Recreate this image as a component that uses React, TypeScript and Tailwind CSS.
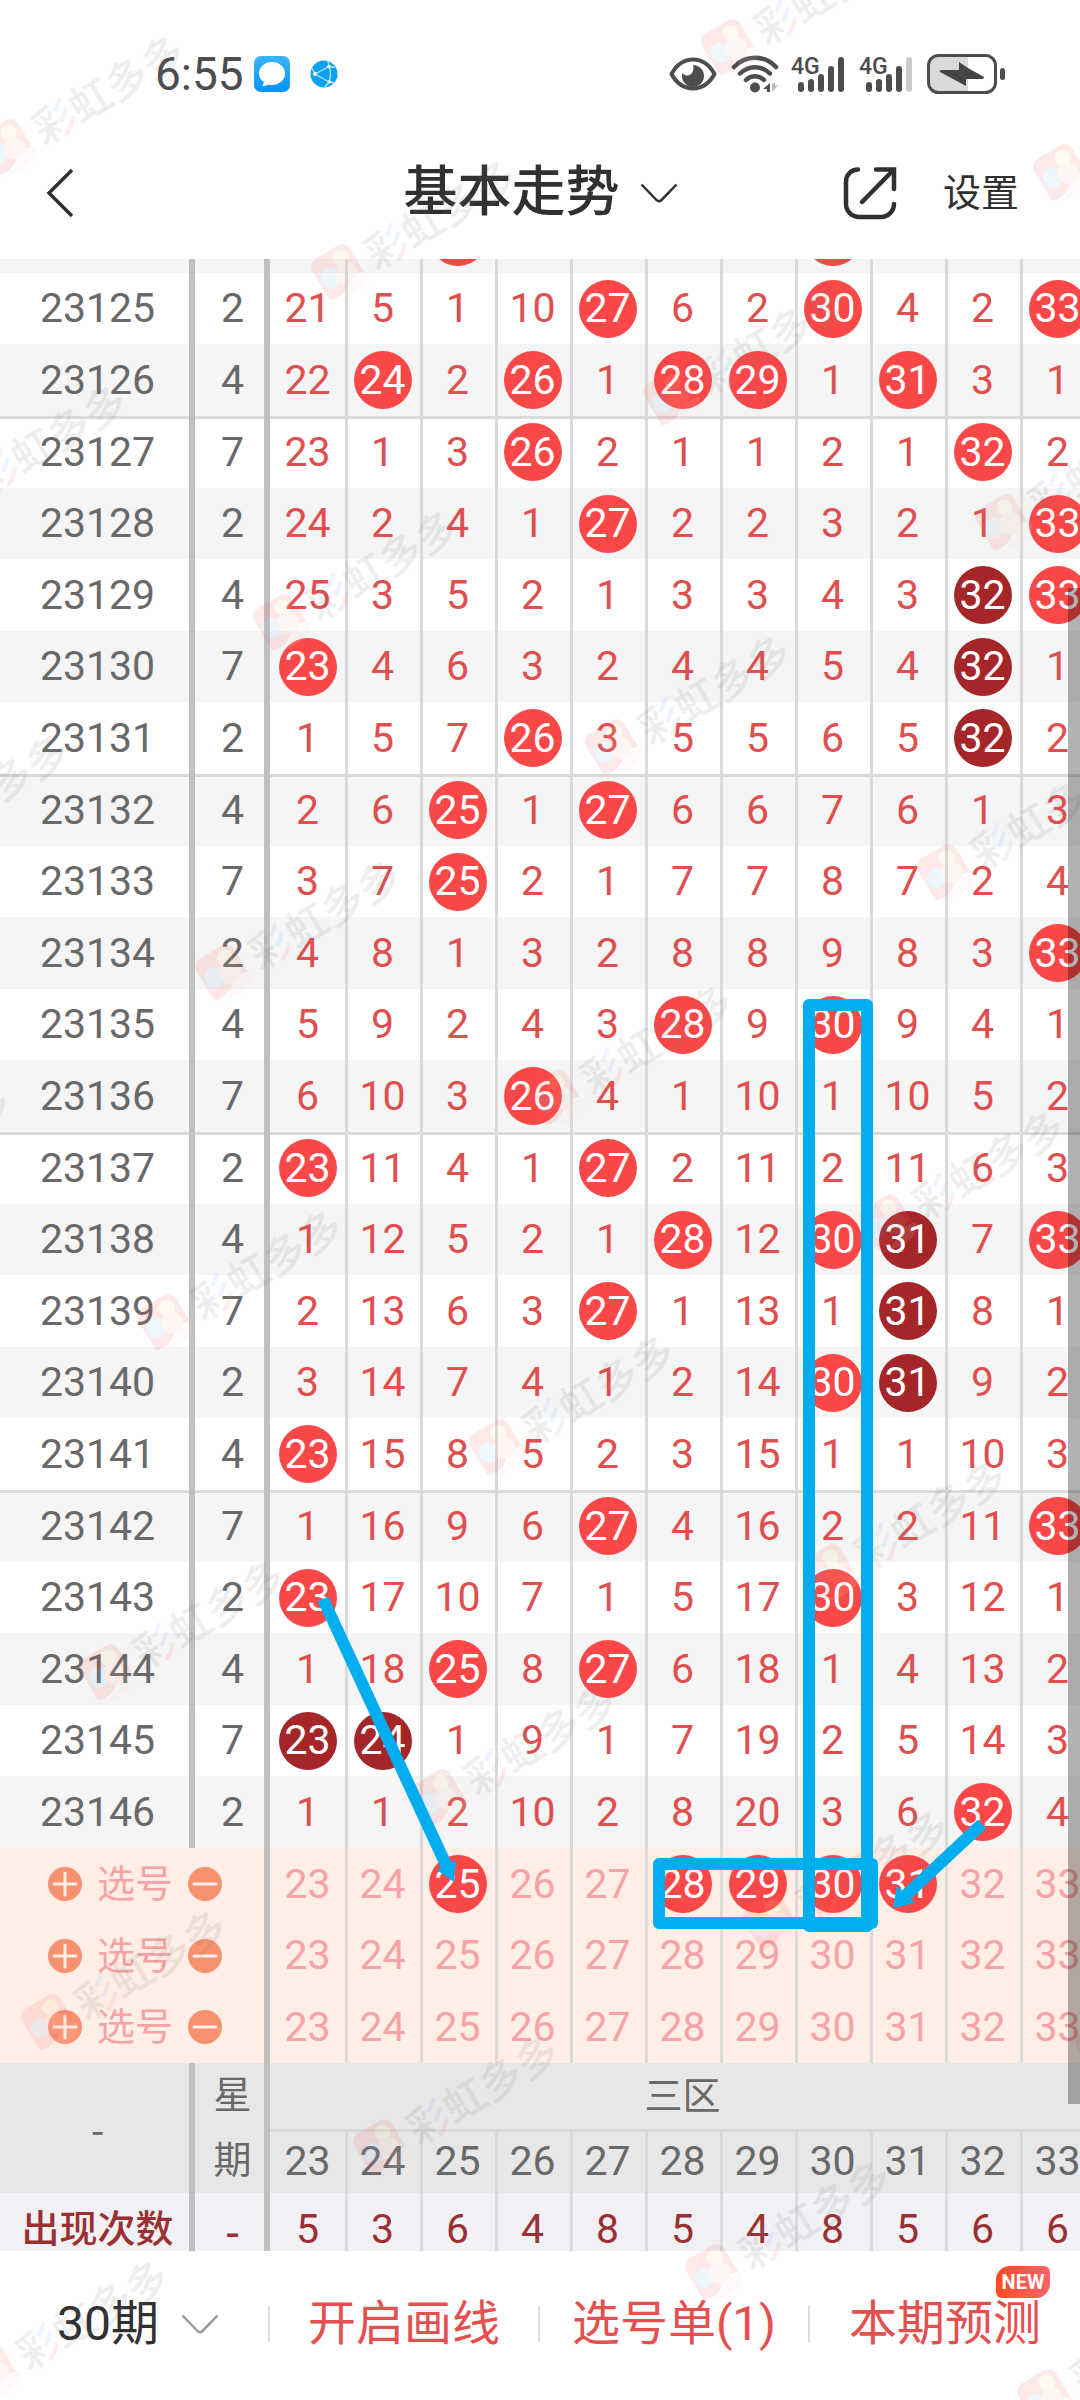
import * as React from 'react';
import { clsx } from 'clsx';

/**
 * Trend chart page: draw history for zone three, pick rows, totals and
 * the lines a user has drawn over the chart.
 */

const NUMBERS = [23, 24, 25, 26, 27, 28, 29, 30, 31, 32, 33];

// "*" is a drawn number, "#" a drawn number that repeats, the rest are misses
interface Draw {
  issue: string;
  weekday: number;
  cells: string;
}

const groups: Draw[][] = [
  [
    { issue: '', weekday: 0, cells: '_ _ * _ _ _ _ * _ _ _' },
    { issue: '23125', weekday: 2, cells: '21 5 1 10 * 6 2 * 4 2 *' },
    { issue: '23126', weekday: 4, cells: '22 * 2 * 1 * * 1 * 3 1' },
  ],
  [
    { issue: '23127', weekday: 7, cells: '23 1 3 * 2 1 1 2 1 * 2' },
    { issue: '23128', weekday: 2, cells: '24 2 4 1 * 2 2 3 2 1 *' },
    { issue: '23129', weekday: 4, cells: '25 3 5 2 1 3 3 4 3 # *' },
    { issue: '23130', weekday: 7, cells: '* 4 6 3 2 4 4 5 4 # 1' },
    { issue: '23131', weekday: 2, cells: '1 5 7 * 3 5 5 6 5 # 2' },
  ],
  [
    { issue: '23132', weekday: 4, cells: '2 6 * 1 * 6 6 7 6 1 3' },
    { issue: '23133', weekday: 7, cells: '3 7 * 2 1 7 7 8 7 2 4' },
    { issue: '23134', weekday: 2, cells: '4 8 1 3 2 8 8 9 8 3 *' },
    { issue: '23135', weekday: 4, cells: '5 9 2 4 3 * 9 * 9 4 1' },
    { issue: '23136', weekday: 7, cells: '6 10 3 * 4 1 10 1 10 5 2' },
  ],
  [
    { issue: '23137', weekday: 2, cells: '* 11 4 1 * 2 11 2 11 6 3' },
    { issue: '23138', weekday: 4, cells: '1 12 5 2 1 * 12 * # 7 *' },
    { issue: '23139', weekday: 7, cells: '2 13 6 3 * 1 13 1 # 8 1' },
    { issue: '23140', weekday: 2, cells: '3 14 7 4 1 2 14 * # 9 2' },
    { issue: '23141', weekday: 4, cells: '* 15 8 5 2 3 15 1 1 10 3' },
  ],
  [
    { issue: '23142', weekday: 7, cells: '1 16 9 6 * 4 16 2 2 11 *' },
    { issue: '23143', weekday: 2, cells: '* 17 10 7 1 5 17 * 3 12 1' },
    { issue: '23144', weekday: 4, cells: '1 18 * 8 * 6 18 1 4 13 2' },
    { issue: '23145', weekday: 7, cells: '# # 1 9 1 7 19 2 5 14 3' },
    { issue: '23146', weekday: 2, cells: '1 1 2 10 2 8 20 3 6 * 4' },
  ],
];

const picks: number[][] = [[25, 28, 29, 30, 31], [], []];
const totals = [5, 3, 6, 4, 8, 5, 4, 8, 5, 6, 6];

// Cell rules are inset shadows so that every column keeps its full width
const headRule = 'shadow-[inset_-6px_0_0_#c0c0c0]';
const headRuleTop = 'shadow-[inset_-6px_0_0_#c0c0c0,inset_0_3px_0_#dadada]';
const thinRule = 'shadow-[inset_3px_0_0_#dadada]';
const thinRuleTop = 'shadow-[inset_3px_0_0_#dadada,inset_0_3px_0_#dadada]';
const topRule = 'shadow-[inset_0_3px_0_#dadada]';

const numberRule = (col: number, top: boolean) => {
  if (col === 0) return top ? topRule : '';
  return top ? thinRuleTop : thinRule;
};

const Ball: React.FC<{ value: number; repeat?: boolean }> = ({ value, repeat }) => (
  <span
    className={clsx(
      'mx-auto flex size-[58px] items-center justify-center rounded-full text-white',
      repeat ? 'bg-[#a52629]' : 'bg-[#fa4848]'
    )}
  >
    {value}
  </span>
);

const DrawRow: React.FC<{ draw: Draw; index: number; shaded: boolean; ruled: boolean }> = ({
  draw,
  index,
  shaded,
  ruled,
}) => (
  <tr className={clsx(index % 2 ? 'h-[71px]' : 'h-[72px]', shaded ? 'bg-[#f5f5f5]' : 'bg-white')}>
    <th scope="row" className={clsx('p-0 font-normal', ruled ? headRuleTop : headRule)}>
      {draw.issue}
    </th>
    <td className={clsx('p-0', ruled ? headRuleTop : headRule)}>{draw.weekday || ''}</td>
    {draw.cells.split(' ').map((cell, col) => (
      <td key={col} className={clsx('p-0 text-[#e04e4e]', numberRule(col, ruled))}>
        {cell === '*' || cell === '#' ? (
          <Ball value={NUMBERS[col]} repeat={cell === '#'} />
        ) : (
          cell.replace('_', '')
        )}
      </td>
    ))}
  </tr>
);

const RoundButton: React.FC<{ label: string; plus?: boolean }> = ({ label, plus }) => (
  <button type="button" aria-label={label} className="size-[34px]">
    <svg viewBox="0 0 34 34" className="size-full">
      <circle cx="17" cy="17" r="17" fill="#f79271" />
      <path d={plus ? 'M6 17h22M17 6v22' : 'M6 17h22'} stroke="#ffeee6" strokeWidth="3" strokeLinecap="round" />
    </svg>
  </button>
);

const PickRow: React.FC<{ picked: number[]; index: number }> = ({ picked, index }) => (
  <tr className={clsx('bg-[#feeee6]', index % 2 ? 'h-[71px]' : 'h-[72px]')}>
    <th scope="row" colSpan={2} className={clsx('p-0 font-normal', headRule)}>
      <div className="flex items-center gap-[15px] pl-12 text-[38px] leading-none text-[#f6a3a5]">
        <RoundButton label="添加" plus />
        <span>选号</span>
        <RoundButton label="删除" />
      </div>
    </th>
    {NUMBERS.map((n, col) => (
      <td key={n} className={clsx('p-0', numberRule(col, false))}>
        <button type="button" className="w-full text-[#f6a3a5]">
          {picked.includes(n) ? <Ball value={n} /> : n}
        </button>
      </td>
    ))}
  </tr>
);

const TrendTable = () => {
  let count = 0;
  return (
    <table className="w-[1095px] shrink-0 table-fixed border-collapse text-center text-[41px] leading-none text-[#696969]">
      <colgroup>
        <col className="w-[195px]" />
        <col className="w-[75px]" />
        {NUMBERS.map((n) => (
          <col key={n} className="w-[75px]" />
        ))}
      </colgroup>
      {groups.map((group, g) => (
        <tbody key={g}>
          {group.map((draw, i) => (
            <DrawRow
              key={draw.issue}
              draw={draw}
              index={i}
              shaded={count++ % 2 === 0}
              ruled={i === 0 && g > 0}
            />
          ))}
        </tbody>
      ))}
      <tbody>
        {picks.map((picked, i) => (
          <PickRow key={i} picked={picked} index={i} />
        ))}
      </tbody>
      <tfoot>
        <tr className="h-[66px] bg-[#e7e7e7] text-[38px]">
          <th rowSpan={2} className={clsx("p-0 font-['Noto_Sans_CJK_SC',sans-serif] font-normal", headRule)}>
            -
          </th>
          <th rowSpan={2} className={clsx('p-0 leading-[65px] font-normal', headRule)}>
            星
            <br />期
          </th>
          <th colSpan={11} className="p-0 font-normal">
            三区
          </th>
        </tr>
        <tr className="h-16 bg-[#e7e7e7]">
          {NUMBERS.map((n, col) => (
            <th key={n} scope="col" className={clsx('p-0 font-normal', numberRule(col, true))}>
              {n}
            </th>
          ))}
        </tr>
        <tr className="h-[72px] bg-[#f1f0f5] text-[#9b3033]">
          <th scope="row" className={clsx('p-0 text-[38px] font-medium', headRule)}>
            出现次数
          </th>
          <td className={clsx("p-0 font-['Noto_Sans_CJK_SC',sans-serif] font-medium", headRule)}>-</td>
          {totals.map((total, col) => (
            <td key={col} className={clsx('p-0', numberRule(col, false))}>
              {total}
            </td>
          ))}
        </tr>
      </tfoot>
    </table>
  );
};

// Signal bars; the last one is dimmed when reception is not full
const Signal: React.FC<{ full?: boolean }> = ({ full }) => (
  <svg viewBox="0 0 54 38" className="h-[38px] w-[54px] overflow-visible">
    <text x="0" y="19" fontFamily="Roboto" fontWeight="500" fontSize="23" fill="#4d4d4d">
      4G
    </text>
    <g strokeWidth="6" strokeLinecap="round" stroke="#4d4d4d">
      <path d="M10 30v4M20 27v7M30 22v12M40 14v20" />
      <path d="M50 5v29" stroke={full ? '#4d4d4d' : '#cccccc'} />
    </g>
  </svg>
);

const StatusBar = () => (
  <div className="flex h-[148px] items-center pr-[75px] pl-[155px]">
    <span className="text-[46px] leading-none text-[#4d4d4d]">6:55</span>
    <svg viewBox="0 0 36 36" className="ml-2.5 size-9">
      <defs>
        <linearGradient id="chat" x1="0" y1="0" x2="0" y2="1">
          <stop offset="0" stopColor="#3cb4fb" />
          <stop offset="1" stopColor="#0295ff" />
        </linearGradient>
      </defs>
      <rect width="36" height="36" rx="7" fill="url(#chat)" />
      <path
        d="M18 6c7.300 0 13 4.900 13 11.500S25.300 29 18 29c-1.400 0-2.700-.1-3.900-.5-1.500 1-3.600 1.500-5.900 1.500 1-1.200 1.500-2.500 1.600-3.900C6.800 24 5 21 5 17.500 5 10.900 10.700 6 18 6z"
        fill="#fff"
      />
    </svg>
    <svg viewBox="0 0 28 28" className="ml-5 size-7">
      <circle cx="14" cy="14" r="13.500" fill="#0aa1ee" />
      <g stroke="#bfe8ff" strokeWidth="1.300" fill="none">
        <path d="M5 14 19 6.500M5 14l14 8M19 6.500c2 5 2 10.500 0 15.500M5 14 2 8M19 6.500 18 1M19 22l7 1M19 22l-4 5M19 6.500l6 1" />
      </g>
      <g fill="#fff">
        <circle cx="5" cy="14" r="2" />
        <circle cx="19" cy="6.500" r="1.800" />
        <circle cx="19.500" cy="22" r="1.800" />
      </g>
    </svg>
    <div className="ml-auto flex items-center">
      <svg viewBox="0 0 48 34" className="h-[34px] w-12">
        <path
          d="M2.500 17C8 7 15.500 2.500 24 2.500S40 7 45.500 17C40 27 32.500 31.500 24 31.500S8 27 2.500 17z"
          fill="none"
          stroke="#4d4d4d"
          strokeWidth="4"
          strokeLinejoin="round"
        />
        <path d="M24 8a11 11 0 1 1-10.600 8c1.500 2.500 5 3.500 8 1.500 3.200-2.200 3.600-6.500 2.600-9.500z" fill="#4d4d4d" />
      </svg>
      <svg viewBox="0 0 48 38" className="ml-3.5 h-[38px] w-12">
        <g fill="none" stroke="#4d4d4d" strokeWidth="4.500" strokeLinecap="round">
          <path d="M3 12C14.500-.5 33.500-.5 45 12" />
          <path d="M9 18.500c8.500-8.500 21.500-8.500 30 0" />
          <path d="M15 25c5-5 13-5 18 0" />
        </g>
        <circle cx="24" cy="32.500" r="5" fill="#4d4d4d" />
        <path d="M39 28v9h-3v-3h-4z" fill="#4d4d4d" />
        <path d="M41 28v9l6-6.500h-3V28z" fill="#bdbdbd" />
      </svg>
      <div className="ml-3 flex gap-3.5">
        <Signal full />
        <Signal />
      </div>
      <svg viewBox="0 0 78 40" className="ml-3.5 h-10 w-[78px]">
        <path d="M12 2h29v36H12A10 10 0 0 1 2 28V12A10 10 0 0 1 12 2z" fill="#dadada" />
        <rect x="1.500" y="1.500" width="67" height="37" rx="10" fill="none" stroke="#4d4d4d" strokeWidth="3" />
        <path d="M32 8 41 14 57 23Q57 25 54 25H39v7L13 18q-1-2 2-2h17z" fill="#454545" />
        <rect x="73" y="14" width="5" height="12" rx="2.500" fill="#4d4d4d" />
      </svg>
    </div>
  </div>
);

const Header = () => (
  <header className="shrink-0 bg-white pb-[21px] text-[#303030]">
    <StatusBar />
    <div className="grid h-[90px] grid-cols-[1fr_auto_1fr] items-center pr-[61px] pl-[46px]">
      <button type="button" aria-label="返回" className="justify-self-start">
        <svg viewBox="0 0 28 50" className="h-[50px] w-7" fill="none" stroke="currentColor" strokeWidth="3.500">
          <path d="M26 2 3 25l23 23" />
        </svg>
      </button>
      <h1 className="pl-4">
        <button type="button" className="flex items-center gap-5 text-[54px] leading-none font-medium">
          基本走势
          <svg viewBox="0 0 38 20" className="h-5 w-[38px]" fill="none" stroke="currentColor" strokeWidth="2.500">
            <path d="M1.500 1.500 16.500 17q2.500 2.500 5 0l15-15.500" />
          </svg>
        </button>
      </h1>
      <div className="flex items-center gap-[46px] justify-self-end">
        <button type="button" aria-label="分享">
          <svg
            viewBox="0 0 54 54"
            className="size-[54px]"
            fill="none"
            stroke="currentColor"
            strokeWidth="4.500"
            strokeLinecap="round"
          >
            <path d="M15 3.500A12 12 0 0 0 3 15.500V38a13 13 0 0 0 13 13h22a13 13 0 0 0 13-13" />
            <path d="M33 3.500h18V23M50 4.500 19 36" />
          </svg>
        </button>
        <button type="button" className="text-[38px] leading-none">
          设置
        </button>
      </div>
    </div>
  </header>
);

const Footer = () => (
  <nav className="relative -mt-3.5 grid h-[149px] shrink-0 grid-cols-4 items-center divide-x-2 divide-[#dedede] bg-white pb-1 text-[48px] leading-none text-[#e64f4f]">
    <button type="button" className="flex h-9 items-center justify-center gap-[22px] pl-2 text-[#303030]">
      30期
      <svg viewBox="0 0 38 20" className="h-5 w-[38px]" fill="none" stroke="#9a9a9a" strokeWidth="2.500">
        <path d="M1.500 1.500 16.500 17q2.500 2.500 5 0l15-15.500" />
      </svg>
    </button>
    <button type="button" className="flex h-9 items-center justify-center">
      开启画线
    </button>
    <button type="button" className="flex h-9 items-center justify-center">
      选号单(1)
    </button>
    <button type="button" className="relative flex h-9 items-center justify-center">
      本期预测
      <span className="absolute right-[30px] bottom-11 flex h-8 w-[54px] items-center justify-center rounded-tl-[14px] rounded-tr-md rounded-br-[14px] rounded-bl-md bg-linear-to-r from-[#ff4a1c] to-[#ff6468] text-xl leading-none font-bold text-white">
        NEW
      </span>
    </button>
  </nav>
);

// Brand mark repeated on a slanted lattice
const marks: { x: number; y: number }[] = [];
for (let i = -1; i < 5; i++) {
  for (let j = -2; j < 8; j++) {
    const x = 338 + 332 * i - 58 * j;
    const y = 271 + 125 * i + 350 * j;
    if (x > -200 && x < 1110 && y > -30 && y < 2430) marks.push({ x, y });
  }
}

const Watermark = () => (
  <svg aria-hidden="true" className="pointer-events-none absolute inset-0 size-full">
    <defs>
      <pattern id="brandInk" patternUnits="userSpaceOnUse" x="33" y="-40" width="400" height="100">
        <rect width="23" height="100" fill="#777" />
        <rect x="23" width="19" height="52" fill="#6cb0ff" />
        <rect x="23" y="52" width="19" height="48" fill="#ff7474" />
        <rect x="42" width="358" height="100" fill="#777" />
      </pattern>
    </defs>
    {marks.map(({ x, y }) => (
      <g key={`${x},${y}`} transform={`translate(${x} ${y}) rotate(-31)`} opacity="0.12">
        <path d="M-13-22h26a9 9 0 0 1 9 9v27q-10-5-20 3-12 9-24 4V-13a9 9 0 0 1 9-9z" fill="#f8514f" />
        <circle cx="9" cy="-10" r="8" fill="#ffd884" />
        <circle cx="-10" cy="2" r="10" fill="#7db8fb" />
        <circle cx="6" cy="6" r="11" fill="#ffb3a3" />
        <path d="M-20 24q12 4 22-5 10-7 22-3-2 12-14 12-12 3-30-4z" fill="#ffdcd2" />
        <text
          x="33"
          y="20"
          fontFamily="'Noto Sans CJK SC', sans-serif"
          fontSize="42"
          fontWeight="500"
          fill="url(#brandInk)"
        >
          彩虹多多
        </text>
      </g>
    ))}
  </svg>
);

// Lines drawn by the user with the marker tool
const Drawing = () => (
  <svg
    aria-hidden="true"
    className="pointer-events-none absolute inset-0 size-full"
    fill="none"
    stroke="#00adef"
    strokeWidth="12"
    strokeLinejoin="round"
  >
    <rect x="809" y="1005" width="58" height="921" />
    <rect x="659" y="1864" width="213" height="59" />
    <path d="M323 1599 447 1867" />
    <path d="M982 1824 904 1897" />
    <g fill="#00adef" stroke="none">
      <path d="m454 1882-17-12 19-10z" />
      <path d="m893 1908 4-22 18 17z" />
    </g>
  </svg>
);

export default function App() {
  return (
    <div className="relative flex h-screen flex-col overflow-hidden bg-white font-['Roboto','Noto_Sans_CJK_SC',sans-serif]">
      <Header />
      <main className="relative flex min-h-0 flex-1 flex-col justify-end overflow-hidden">
        <TrendTable />
      </main>
      <Footer />
      <Watermark />
      <Drawing />
      {/* scroll thumb */}
      <div className="absolute top-[588px] right-0 h-[1516px] w-3 bg-black/30" />
    </div>
  );
}
